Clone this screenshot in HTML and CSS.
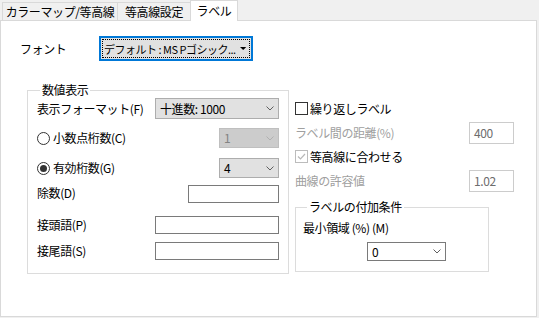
FILE: index.html
```html
<!DOCTYPE html>
<html lang="ja">
<head>
    <meta charset="UTF-8">
    <title>ラベル</title>
    <link rel="stylesheet" href="styles.css">
</head>
<body>
    <!-- タブ -->
    <div class="tabs">
        <div class="tab tab-color">カラーマップ/等高線</div>
        <div class="tab tab-level">等高線設定</div>
        <div class="tab tab-label active">ラベル</div>
    </div>

    <!-- パネル -->
    <div class="panel">
        <div class="font-row">
            <span class="font-label">フォント</span>
            <button class="font-button">
                <span class="focus">
                    <span class="font-name">デフォルト : MS Pゴシック...</span>
                    <svg width="10" height="5" viewBox="0 0 10 5"><polygon points="0,0 10,0 5,5" fill="#000"/></svg>
                </span>
            </button>
        </div>

        <div class="body">
            <!-- 数値表示 -->
            <fieldset class="group numbers">
                <legend>数値表示</legend>
                <div class="field-row">
                    <span>表示フォーマット(F)</span>
                    <div class="combo wide">
                        <span>十進数: 1000</span>
                        <svg width="8" height="5" viewBox="0 0 8 5"><polyline points="0.5,0.5 4,4 7.5,0.5" fill="none" stroke="#606060"/></svg>
                    </div>
                </div>
                <div class="field-row mt9">
                    <span class="radio-line"><span class="radio"></span>小数点桁数(C)</span>
                    <div class="combo small disabled">
                        <span>1</span>
                        <svg width="8" height="5" viewBox="0 0 8 5"><polyline points="0.5,0.5 4,4 7.5,0.5" fill="none" stroke="#b0b0b0"/></svg>
                    </div>
                </div>
                <div class="field-row mt10">
                    <span class="radio-line"><span class="radio on"></span>有効桁数(G)</span>
                    <div class="combo small">
                        <span>4</span>
                        <svg width="8" height="5" viewBox="0 0 8 5"><polyline points="0.5,0.5 4,4 7.5,0.5" fill="none" stroke="#606060"/></svg>
                    </div>
                </div>
                <div class="field-row mt7">
                    <span class="label-top">除数(D)</span>
                    <div class="textbox divisor"></div>
                </div>
                <div class="field-row mt13">
                    <span>接頭語(P)</span>
                    <div class="textbox wide"></div>
                </div>
                <div class="field-row mt8">
                    <span>接尾語(S)</span>
                    <div class="textbox wide"></div>
                </div>
            </fieldset>

            <!-- 右側 -->
            <div class="side">
                <div class="check-line">
                    <span class="checkbox"></span>繰り返しラベル
                </div>
                <div class="field-row mt7">
                    <span class="muted">ラベル間の距離(%)</span>
                    <div class="textbox value">400</div>
                </div>
                <div class="check-line mt6">
                    <span class="checkbox disabled">
                        <svg width="11" height="11" viewBox="0 0 11 11"><polyline points="2,5.5 4.5,8 9,3" fill="none" stroke="#b8b8b8" stroke-width="1.2"/></svg>
                    </span>等高線に合わせる
                </div>
                <div class="field-row mt7">
                    <span class="muted">曲線の許容値</span>
                    <div class="textbox value">1.02</div>
                </div>

                <fieldset class="group conditions">
                    <legend>ラベルの付加条件</legend>
                    <div class="cond-label">最小領域 (%) (M)</div>
                    <div class="combo area">
                        <span>0</span>
                        <svg width="8" height="5" viewBox="0 0 8 5"><polyline points="0.5,0.5 4,4 7.5,0.5" fill="none" stroke="#606060"/></svg>
                    </div>
                </fieldset>
            </div>
        </div>
    </div>
</body>
</html>
```

FILE: styles.css
```css
/* 全体 */
body {
    margin: 0;
    background-color: #f0f0f0;
    font-family: "Noto Sans CJK JP", "Liberation Sans", sans-serif;
    font-size: 12px;
    line-height: 16px;
    color: #000;
    letter-spacing: -0.4px;
}

/* タブ */
.tabs {
    display: flex;
    align-items: flex-end;
    height: 20px;
    padding-left: 2px;
}

.tab {
    height: 18px;
    box-sizing: border-box;
    border: 1px solid #d9d9d9;
    border-bottom: none;
    margin-right: -1px;
    text-align: center;
    line-height: 17px;
    background-color: #f0f0f0;
}

.tab-color { width: 116px; }
.tab-level { width: 74px; }

.tab-label {
    width: 48px;
}

.tab.active {
    height: 21px;
    margin-bottom: -1px;
    background-color: #fff;
    position: relative;
    z-index: 1;
    line-height: 19px;
}

/* パネル */
.panel {
    width: 537px;
    height: 297px;
    box-sizing: border-box;
    border: 1px solid #d9d9d9;
    background-color: #fff;
}

.font-row {
    display: flex;
    align-items: center;
    padding: 15px 0 0 19px;
}

.font-label {
    width: 79px;
}

.font-button {
    width: 154px;
    height: 25px;
    box-sizing: border-box;
    border: 2px solid #0078d7;
    background-color: #e1e1e1;
    padding: 1px;
    margin: 0;
    font: inherit;
    color: #000;
}

.focus {
    display: flex;
    align-items: center;
    justify-content: space-between;
    gap: 4px;
    height: 100%;
    box-sizing: border-box;
    border: 1px dotted #000;
    padding: 0 3px 0 1px;
}

.font-name {
    white-space: nowrap;
    font-size: 11px;
    letter-spacing: -0.5px;
}

.body {
    display: flex;
    gap: 6px;
    margin-top: 21px;
    padding-left: 26px;
}

/* グループボックス */
.group {
    margin: 0;
    border: 1px solid #dcdcdc;
    box-sizing: border-box;
}

.group legend {
    padding: 0 2px;
    line-height: 16px;
}

.numbers {
    width: 262px;
    padding: 0 9px 13px;
}

.numbers legend {
    margin-left: 3px;
}

.field-row {
    display: flex;
    align-items: center;
    justify-content: space-between;
}

.mt6 { margin-top: 6px; }
.mt7 { margin-top: 7px; }
.mt8 { margin-top: 8px; }
.mt9 { margin-top: 9px; }
.mt10 { margin-top: 10px; }
.mt13 { margin-top: 13px; }

.label-top {
    align-self: flex-start;
}

/* コンボボックス */
.combo {
    display: flex;
    align-items: center;
    justify-content: space-between;
    box-sizing: border-box;
    border: 1px solid #adadad;
    background-color: #e1e1e1;
    padding: 0 4px 0 4px;
}

.combo.wide {
    width: 124px;
    height: 21px;
}

.combo.small {
    width: 60px;
    height: 20px;
}

.combo.disabled {
    background-color: #cccccc;
    border-color: #bfbfbf;
    color: #838383;
}

.combo.area {
    width: 79px;
    height: 19px;
    margin: 6px 0 0 64px;
    background-color: #fff;
    border-color: #7a7a7a;
}

/* テキストボックス */
.textbox {
    box-sizing: border-box;
    border: 1px solid #7a7a7a;
    background-color: #fff;
    height: 18px;
}

.textbox.wide {
    width: 124px;
}

.textbox.divisor {
    width: 91px;
}

.textbox.value {
    width: 45px;
    height: 22px;
    border-color: #cccccc;
    color: #6d6d6d;
    padding: 2px 0 0 4px;
}

/* ラジオボタン */
.radio-line {
    display: flex;
    align-items: center;
    gap: 3px;
}

.radio {
    width: 13px;
    height: 13px;
    box-sizing: border-box;
    border: 1px solid #333;
    border-radius: 50%;
    display: flex;
    align-items: center;
    justify-content: center;
}

.radio.on::after {
    content: "";
    width: 7px;
    height: 7px;
    border-radius: 50%;
    background-color: #333;
}

/* 右側 */
.side {
    width: 219px;
    padding-top: 20px;
}

.muted {
    color: #a0a0a0;
}

.check-line {
    display: flex;
    align-items: center;
    gap: 2px;
    height: 13px;
}

.checkbox {
    width: 13px;
    height: 13px;
    box-sizing: border-box;
    border: 1px solid #333;
    background-color: #fff;
    display: flex;
    align-items: center;
    justify-content: center;
}

.checkbox.disabled {
    border-color: #bcbcbc;
}

.conditions {
    width: 194px;
    margin-top: 7px;
    padding: 0 7px 10px;
}

.conditions legend {
    margin-left: 4px;
}

.cond-label {
    margin-top: 5px;
}
```
